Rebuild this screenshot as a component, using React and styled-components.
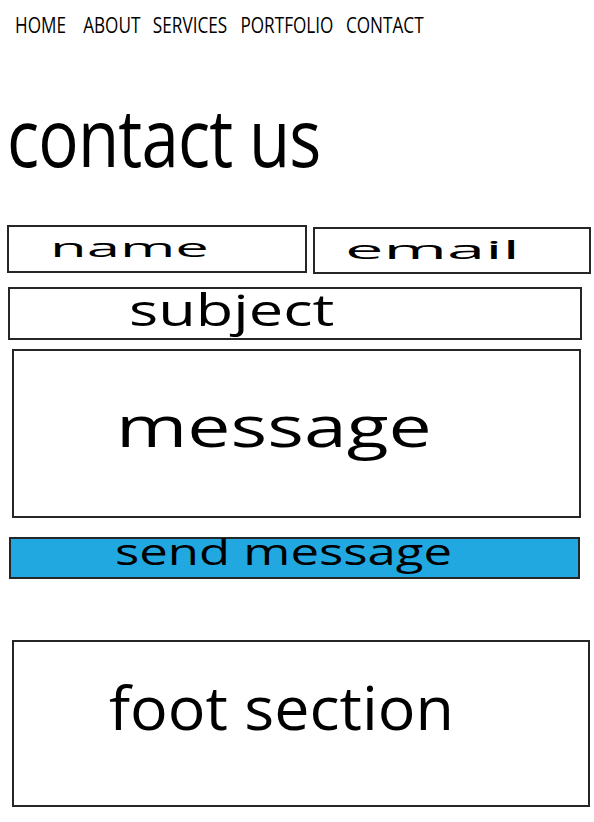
import React from "react";
import styled, { createGlobalStyle } from "styled-components";

const Global = createGlobalStyle`
  html, body { margin: 0; padding: 0; background: #fff; }
  body { font-family: "Open Sans", "Liberation Sans", sans-serif; color: #000; }
  * { box-sizing: border-box; }
`;

const Page = styled.div`
  width: 594px;
  min-height: 822px;
  display: flex;
  flex-direction: column;
  align-items: flex-start;
  overflow: hidden;
`;

const Nav = styled.nav`
  padding: 9px 0 0 15px;
`;

const NavList = styled.ul`
  display: flex;
  gap: 16px;
  margin: 0;
  padding: 0;
  list-style: none;
  font-size: 22px;
  line-height: 30px;
  transform: scaleX(0.78);
  transform-origin: left top;
  white-space: nowrap;
`;

const NavItem = styled.li`
  margin-right: ${(p) => p.$extra || 0}px;
`;

const Title = styled.h1`
  margin: 57px 0 0 7px;
  font-size: 80px;
  font-weight: 400;
  line-height: 1;
  transform: scaleX(0.84);
  transform-origin: left top;
  white-space: nowrap;
  letter-spacing: -1px;
`;

const Row = styled.div`
  display: flex;
  align-items: flex-start;
  gap: 6px;
  margin: ${(p) => p.$mt}px 0 0 ${(p) => p.$ml}px;
`;

const Field = styled.div`
  display: flex;
  align-items: flex-start;
  width: ${(p) => p.$w}px;
  height: ${(p) => p.$h}px;
  margin: ${(p) => p.$mt || 0}px 0 0 ${(p) => p.$ml || 0}px;
  border: 2px solid #262626;
  background: #fff;
  overflow: visible;
`;

const SendButton = styled.button`
  display: flex;
  align-items: flex-start;
  width: 571px;
  height: 42px;
  margin: 19px 0 0 9px;
  padding: 0;
  border: 2px solid #262626;
  background: #21a8e0;
  color: #000;
  font-family: inherit;
  cursor: pointer;
`;

const Footer = styled.footer`
  display: flex;
  align-items: flex-start;
  width: 578px;
  height: 167px;
  margin: 61px 0 0 12px;
  border: 2px solid #262626;
`;

const Label = styled.span`
  display: inline-block;
  font-size: ${(p) => p.$size}px;
  font-weight: 400;
  line-height: 1;
  white-space: nowrap;
  margin: ${(p) => p.$mt}px 0 0 ${(p) => p.$ml}px;
  transform: scaleX(${(p) => p.$sx});
  transform-origin: left top;
`;

export default function App() {
  return (
    <>
      <Global />
      <Page>
        <Nav>
          <NavList>
            <NavItem $extra={6}>HOME</NavItem>
            <NavItem>ABOUT</NavItem>
            <NavItem $extra={1}>SERVICES</NavItem>
            <NavItem>PORTFOLIO</NavItem>
            <NavItem>CONTACT</NavItem>
          </NavList>
        </Nav>
        <Title>contact us</Title>
        <Row $mt={49} $ml={7}>
          <Field $w={300} $h={48}>
            <Label $size={26} $sx={2.3} $ml={41} $mt={7}>name</Label>
          </Field>
          <Field $w={278} $h={47} $mt={2}>
            <Label $size={26} $sx={2.64} $ml={30} $mt={7}>email</Label>
          </Field>
        </Row>
        <Field $w={574} $h={53} $mt={13} $ml={8}>
          <Label $size={43} $sx={1.425} $ml={119} $mt={-1}>subject</Label>
        </Field>
        <Field $w={569} $h={169} $mt={9} $ml={12}>
          <Label $size={56} $sx={1.375} $ml={102} $mt={46}>message</Label>
        </Field>
        <SendButton type="button">
          <Label $size={37} $sx={1.375} $ml={104} $mt={-7}>send message</Label>
        </SendButton>
        <Footer>
          <Label $size={60} $sx={1.046} $ml={95} $mt={35}>foot section</Label>
        </Footer>
      </Page>
    </>
  );
}
